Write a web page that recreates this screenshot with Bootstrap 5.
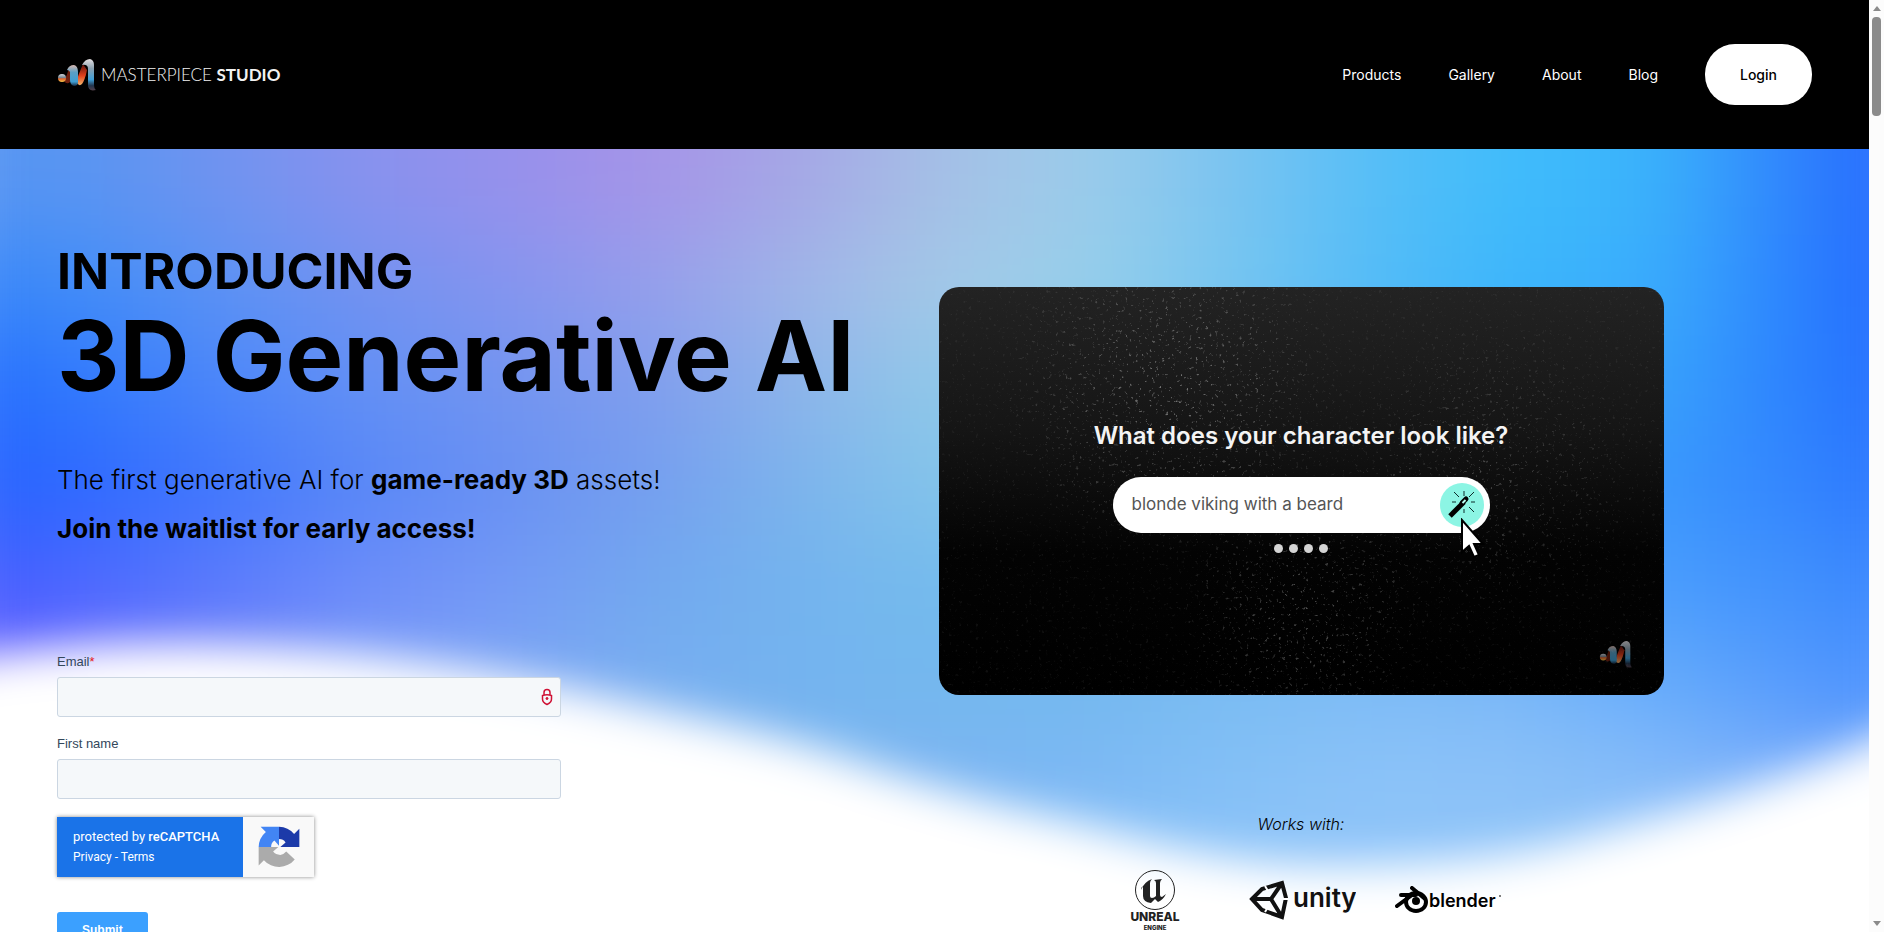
<!DOCTYPE html>
<html lang="en">
<head>
<meta charset="utf-8">
<meta name="viewport" content="width=device-width, initial-scale=1">
<title>Masterpiece Studio</title>
<link rel="stylesheet" href="https://cdn.jsdelivr.net/npm/bootstrap@5.3.0/dist/css/bootstrap.min.css">
<style>
  body { font-family: Inter, "Open Sans", sans-serif; color: #000; background: #fff; padding-right: 15px; }
  a { color: inherit; text-decoration: none; }

  /* header */
  .site-head { background: #000; padding: 44px 57px; }
  .brand { color: #f2f2f2; gap: 5px; }
  .brand-text { font: 300 17px/20px Lato, sans-serif; }
  .brand-text b { font-weight: 700; }
  .site-nav { gap: 47px; font-size: 14px; color: #fff; }
  .btn-login { --bs-btn-bg: #fff; --bs-btn-color: #000; --bs-btn-border-width: 0; --bs-btn-hover-bg: #eee;
    font-size: 14px; font-weight: 500; line-height: 21px; padding: 20px 35px; border-radius: 30px; }

  /* hero backdrop */
  .hero { padding: 0 57px; isolation: isolate; min-height: 0; }
  .sky { position: absolute; z-index: -2; inset: -114px -75px auto -72px; filter: blur(42px); }
  .sky div { height: 100px; }
  .sky div:first-child, .sky div:last-child { height: 200px; }
  .wave { position: absolute; z-index: -1; inset: 0; width: 100%; height: 783px; }

  /* left column */
  .hero-left { padding-top: 92px; }
  .intro { font-size: 50px; line-height: 60px; font-weight: 700; margin: 0; }
  .headline { font-size: 97px; line-height: 110px; font-weight: 700; margin: 0 0 44px; white-space: nowrap; }
  .pitch { font-size: 26px; line-height: 49px; font-weight: 300; margin: 0; }
  .pitch b { font-weight: 700; }

  .signup { width: 504px; margin-top: 99px; font-family: "Liberation Sans", Arial, sans-serif; color: #33475b; }
  .signup label { font-size: 13px; line-height: 20px; margin-bottom: 5px; display: block; }
  .signup .form-control { height: 40px; background: #f5f8fa; border: 1px solid #cbd6e2; border-radius: 3px; }
  .signup .star { color: #e51520; }
  .field + .field { margin-top: 17px; }
  .lock { position: absolute; right: 8px; top: 11px; }
  .captcha { width: 257px; height: 60px; margin: 18px 0 35px; background: #f9f9f9; box-shadow: 0 0 4px #888; font-family: Roboto, sans-serif; color: #fff; }
  .captcha-text { width: 186px; background: #1a73e8; padding: 10px 16px; font-size: 13px; line-height: 20px; }
  .captcha-text b { font-weight: 500; }
  .captcha-text small { font-size: 12px; display: block; }
  .btn-submit { --bs-btn-bg: #3ba0ff; --bs-btn-color: #fff; --bs-btn-border-width: 0; font-size: 12px; line-height: 12px; font-weight: 700; padding: 12px 25px; border-radius: 3px; }

  /* right column */
  .hero-right { padding-top: 138px; }
  .demo { width: 83%; aspect-ratio: 725 / 408; border-radius: 20px; overflow: hidden; background: linear-gradient(#232323, #151515 35%, #030303 65%, #000); color: #f4f4f4; padding-top: 134px; isolation: isolate; }
  .specks { position: absolute; inset: 0; z-index: -1; opacity: .7; }
  .demo h2 { font-size: 24px; line-height: 30px; font-weight: 600; margin-bottom: 26px; }
  .prompt { width: 377px; height: 56px; border-radius: 28px; background: #fff; padding: 0 6px 0 19px; }
  .prompt input { border: 0; background: none; font-size: 17px; color: #555; width: 280px; padding: 0; outline: 0; }
  .wand { width: 44px; height: 44px; border: 0; padding: 0; border-radius: 50%; background: #8cf5e4; }
  .pointer { position: absolute; left: 19px; top: 35px; }
  .dots { gap: 6px; margin-top: 11px; }
  .dots i { width: 9px; height: 9px; border-radius: 50%; background: #d4d4d4; }
  .watermark { position: absolute; right: 32px; bottom: 26px; opacity: .6; }
  .works { width: 83%; margin-top: 117px; font-size: 16px; line-height: 24px; font-weight: 300; font-style: italic; text-align: center; }
  .engines { width: 83%; margin-top: 34px; padding-left: 187px; }
  .engines text { font-family: Inter, sans-serif; }
  .engines .logo-unity { margin-left: 64px; }
  .engines .logo-blender { margin-left: 38px; }

  /* scroll track */
  .track { position: fixed; top: 0; right: 0; width: 15px; height: 100vh; background: #fcfcfc; }
</style>
</head>
<body class="vh-100 overflow-hidden d-flex flex-column">

<header class="site-head d-flex align-items-center justify-content-between">
  <a href="#" class="brand d-flex align-items-center">
    <svg width="39" height="34" viewBox="0 0 39 34" aria-hidden="true">
      <defs>
        <linearGradient id="ribA" x1="0" y1="0" x2="0" y2="1"><stop offset="0" stop-color="#d8b8b0"/><stop offset=".35" stop-color="#5b9fc4"/><stop offset=".8" stop-color="#3f9ed2"/><stop offset="1" stop-color="#172840"/></linearGradient>
        <linearGradient id="ribB" x1="0" y1="0" x2="0" y2="1"><stop offset="0" stop-color="#56100b"/><stop offset=".55" stop-color="#e0401c"/><stop offset="1" stop-color="#f2b46a"/></linearGradient>
        <linearGradient id="ribC" x1="0" y1="0" x2="0" y2="1"><stop offset="0" stop-color="#e5e0e2"/><stop offset=".3" stop-color="#8ba1b0"/><stop offset=".65" stop-color="#3fa0d8"/><stop offset=".85" stop-color="#23354d"/><stop offset="1" stop-color="#54414c"/></linearGradient>
        <linearGradient id="ribD" x1="0" y1="0" x2="0" y2="1"><stop offset="0" stop-color="#d5d9df"/><stop offset=".45" stop-color="#7a8791"/><stop offset=".6" stop-color="#e2622a"/><stop offset="1" stop-color="#f7c64a"/></linearGradient>
        <g id="ribbon">
          <path d="M7 23Q10 18 12 10l5 6-4 8q-3 3-6-1z" fill="#70200f"/>
          <path d="M19 24Q22 15 26 6l4 6q-2 10-5 14-3 3-6-2z" fill="url(#ribB)"/>
          <path d="M10 12Q12 7 17 7q4 1 4 7v10q0 4-4 4-4-1-4-6v-8q-1-2-3-2z" fill="url(#ribA)"/>
          <path d="M25 7Q28 1 33 1q4 1 4 6v19q0 5 2 6-8 2-8-5V11q0-5-6-4z" fill="url(#ribC)"/>
          <circle cx="5" cy="20" r="4" fill="url(#ribD)"/>
        </g>
      </defs>
      <use href="#ribbon"/>
    </svg>
    <span class="brand-text">MASTERPIECE <b>STUDIO</b></span>
  </a>
  <nav class="site-nav d-flex align-items-center">
    <a href="#">Products</a><a href="#">Gallery</a><a href="#">About</a><a href="#">Blog</a>
    <button type="button" class="btn btn-login">Login</button>
  </nav>
</header>

<main class="hero position-relative overflow-hidden flex-grow-1">
  <div class="sky" aria-hidden="true">
    <div style="background:linear-gradient(90deg,#5795f2,#5795f2,#6f93f0,#8892ee,#9690ec,#a594e8,#a5a6e6,#a5bfe6,#9cccea,#7cc4f0,#57bef7,#3fbcfb,#3ab2fb,#2f80fd,#2060ff)"></div>
    <div style="background:linear-gradient(90deg,#3484fa,#3f8cf8,#5a92f4,#7292f0,#8494ef,#959eeb,#9fb4e8,#a4c8e7,#98cfea,#78c6f0,#55bcf7,#3cb6fb,#3aacfc,#2b80fe,#2060ff)"></div>
    <div style="background:linear-gradient(90deg,#1f6aff,#2f78fd,#4a86fa,#6290f5,#7294f0,#7f9dee,#8cb3ea,#90c8e9,#8accec,#70c0f0,#50b4f8,#3cacfb,#38a2fc,#2c80fe,#2066ff)"></div>
    <div style="background:linear-gradient(90deg,#2460ff,#2d68ff,#3f76fd,#5887f7,#6890f3,#759eef,#7cb3ec,#83c4ea,#80c4ec,#70bcf0,#54b0f8,#44a4fb,#3a98fd,#3384fe,#2870ff)"></div>
    <div style="background:linear-gradient(90deg,#4458ff,#4a66ff,#5a7afc,#6c8cfa,#7499f5,#72a8ef,#73b3ee,#75bbed,#72b8ee,#70b6f0,#62b0f6,#54a8fa,#4a9dfd,#4090fd,#3882ff)"></div>
    <div style="background:linear-gradient(90deg,#685cff,#7a70ff,#7c84fa,#80a0f8,#7ca6f4,#78aef0,#74b3ef,#74b8ee,#74b8ef,#7abcf2,#7fbcf6,#7cb8f8,#66acfb,#5499fd,#4a90ff)"></div>
    <div style="background:linear-gradient(90deg,#8878ff,#8878ff,#8890fc,#88a4f8,#80a8f4,#7cb0f2,#7cb4f0,#7cb4f2,#7cb8f4,#84c0f6,#8cc3f8,#8cc2f8,#88bcf9,#7fb0fa,#74a6fb)"></div>
    <div style="background:#8fc4f9"></div>
  </div>
  <svg class="wave" viewBox="0 0 1869 783" preserveAspectRatio="none" aria-hidden="true">
    <defs><filter id="soft" x="-10%" y="-30%" width="120%" height="160%"><feGaussianBlur stdDeviation="22"/></filter></defs>
    <path filter="url(#soft)" fill="#fff" d="M-120 525C0 500 120 490 240 496C380 503 480 520 600 546C700 570 770 583 841 607C920 635 1000 657 1081 675C1160 697 1240 716 1330 716C1420 716 1490 710 1562 694C1680 664 1770 636 1869 594L2000 535V1000H-120z"/>
  </svg>

  <div class="row gx-2">
    <section class="col-6 hero-left">
      <h2 class="intro">INTRODUCING</h2>
      <h1 class="headline">3D Generative AI</h1>
      <p class="pitch">The first generative AI for <b>game-ready 3D</b> assets!</p>
      <p class="pitch"><b>Join the waitlist for early access!</b></p>

      <form class="signup">
        <div class="field">
          <label for="email">Email<span class="star">*</span></label>
          <div class="position-relative">
            <input id="email" type="email" class="form-control">
            <svg class="lock" width="12" height="18" viewBox="0 0 12 18" fill="none" stroke="#cf1235" stroke-width="1.5" aria-hidden="true"><path d="M3 7V4.500a3 3 0 0 1 6 0V7M1.500 7.500Q6 6 10.500 7.500V11q0 3.500-4.500 5.500Q1.500 14.500 1.500 11z"/><circle cx="6" cy="10.500" r="1" fill="#cf1235" stroke-width="1"/></svg>
          </div>
        </div>
        <div class="field">
          <label for="fname">First name</label>
          <input id="fname" type="text" class="form-control">
        </div>
        <div class="captcha d-flex">
          <div class="captcha-text">protected by <b>reCAPTCHA</b><small><a href="#">Privacy</a> - <a href="#">Terms</a></small></div>
          <div class="flex-grow-1 d-flex align-items-center justify-content-center">
            <svg width="42" height="42" viewBox="0 0 64 64" aria-hidden="true">
              <path fill="#1c3aa9" d="M63 32V4l-8 8A31 31 0 0 0 32 1v19a12 12 0 0 1 10 5l-8 7z"/>
              <path fill="#4285f4" d="M32 1H4l8 8A31 31 0 0 0 1 32h19a12 12 0 0 1 5-10l7 8z"/>
              <path fill="#ababab" d="M1 32v28l8-8a31 31 0 0 0 47-1L43 39a13 13 0 0 1-9 5q-7 0-11-5l8-7z"/>
            </svg>
          </div>
        </div>
        <button type="submit" class="btn btn-submit">Submit</button>
      </form>
    </section>

    <section class="col-6 hero-right">
      <div class="demo position-relative d-flex flex-column align-items-center">
        <svg class="specks" width="100%" height="100%" aria-hidden="true">
          <defs>
            <filter id="dust" x="0" y="0" width="100%" height="100%"><feTurbulence type="fractalNoise" baseFrequency=".3" numOctaves="3" seed="8"/><feColorMatrix values="0 0 0 0 .55  0 0 0 0 .55  0 0 0 0 .55  6 0 0 0 -3.9"/><feGaussianBlur stdDeviation=".6"/></filter>
            <radialGradient id="fadeA"><stop offset="0" stop-color="#fff"/><stop offset="1" stop-color="#fff" stop-opacity="0"/></radialGradient>
            <mask id="spread"><rect width="100%" height="100%" fill="#1c1c1c"/><ellipse cx="32%" cy="25%" rx="24%" ry="42%" fill="url(#fadeA)" opacity=".8"/><ellipse cx="50%" cy="80%" rx="18%" ry="30%" fill="url(#fadeA)" opacity=".6"/><ellipse cx="75%" cy="45%" rx="22%" ry="40%" fill="url(#fadeA)" opacity=".4"/></mask>
          </defs>
          <g mask="url(#spread)"><rect width="100%" height="100%" filter="url(#dust)"/></g>
        </svg>
        <h2>What does your character look like?</h2>
        <div class="prompt d-flex align-items-center justify-content-between">
          <input type="text" value="blonde viking with a beard" aria-label="Character description">
          <div class="position-relative">
            <button type="button" class="wand d-block" aria-label="Generate">
              <svg width="44" height="44" viewBox="0 0 44 44" fill="none" stroke="#0c2c2a" aria-hidden="true"><path d="M24 8v5M14 9l5 5M34 9l-5 5M12 19h4M31 19h4M29 24l5 5M24 26v4" stroke-width="1"/><path d="m10 33 14-14" stroke="#000" stroke-width="5"/><path d="m22 20 4-4" stroke="#000" stroke-width="5" stroke-linecap="round"/><path d="m22.500 20 3-3" stroke="#b8fff2" stroke-width="2"/></svg>
            </button>
            <svg class="pointer" width="27" height="42" viewBox="0 0 27 42" aria-hidden="true"><path d="M3 2v32l7-6 5 11 5-2-5-11h9z" fill="#fff" stroke="#000" stroke-width="2"/></svg>
          </div>
        </div>
        <div class="dots d-flex"><i></i><i></i><i></i><i></i></div>
        <svg class="watermark" width="33" height="29" viewBox="0 0 39 34" aria-hidden="true"><use href="#ribbon"/></svg>
      </div>

      <p class="works mb-0">Works with:</p>
      <div class="engines d-flex align-items-start">
        <svg width="58" height="62" viewBox="0 0 58 62" role="img" aria-label="Unreal Engine">
          <circle cx="29" cy="20" r="19.500" fill="none" stroke="#222" stroke-width="1"/>
          <path fill="#222" d="M15 20q3-8 11-11-2 2-2 4v13q0 2 2 2 2 0 4-2V13q0-2-2-3l8-1q-2 2-2 4v12q0 2 2 2l4-3q-3 6-8 8l-3-3-4 4q-8-1-8-7V16q-2 1-2 4z"/>
          <text x="29" y="51" text-anchor="middle" font-size="12" font-weight="800" fill="#222">UNREAL</text>
          <text x="29" y="60" text-anchor="middle" font-size="6" font-weight="800" fill="#222">ENGINE</text>
        </svg>
        <svg class="logo-unity mt-2" width="108" height="42" viewBox="0 0 108 42" role="img" aria-label="Unity">
          <path fill="none" stroke="#111" stroke-width="4" stroke-linejoin="miter" d="M4 21 14 11l20-6 4 15-4 19-20-7zM4 21h19M34 5 23 21l11 18"/>
          <path d="M17 8l3 5M17 34l3-5M35 21h5" stroke="#fff" stroke-width="2"/>
          <text x="45" y="29" font-size="26" font-weight="600" fill="#111">unity</text>
        </svg>
        <svg class="logo-blender mt-3" width="110" height="32" viewBox="0 0 110 32" role="img" aria-label="Blender">
          <path fill="none" stroke="#000" stroke-width="4" stroke-linecap="round" stroke-linejoin="round" d="M3 20 18 9M7 9h15M18 2l12 10"/>
          <ellipse cx="22" cy="16" rx="10" ry="9" fill="none" stroke="#000" stroke-width="4"/>
          <circle cx="22" cy="15" r="4" fill="#000"/>
          <text x="35" y="21" font-size="18" font-weight="600" fill="#000">blender</text>
          <circle cx="106" cy="10" r="1" fill="#555"/>
        </svg>
      </div>
    </section>
  </div>
</main>

<div class="track" aria-hidden="true">
  <svg width="15" height="100%"><path d="m4 11 4-5 4 5z" fill="#8b8b8b"/><rect x="3" y="17" width="9" height="99" rx="4" fill="#8b8b8b"/><svg y="100%" overflow="visible"><path d="m4-11 4 5 4-5z" fill="#8b8b8b"/></svg></svg>
</div>
<script src="https://cdn.jsdelivr.net/npm/bootstrap@5.3.0/dist/js/bootstrap.bundle.min.js"></script>
</body>
</html>
